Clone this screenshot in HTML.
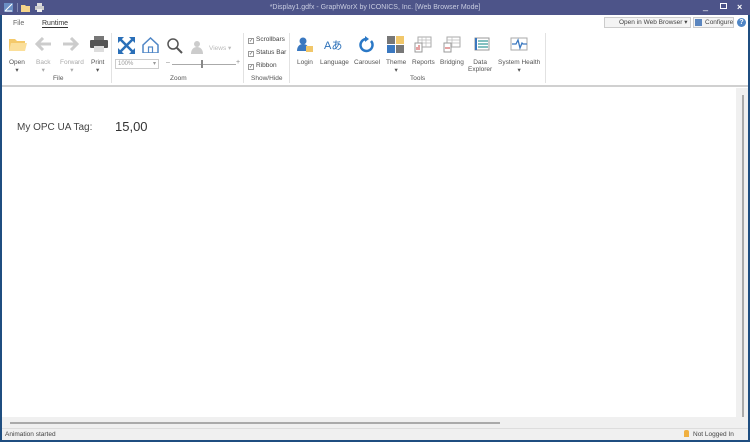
<!DOCTYPE html>
<html><head><meta charset="utf-8"><style>
*{box-sizing:border-box;margin:0;padding:0}
body{width:750px;height:442px;overflow:hidden;background:#1f4e80;font-family:"Liberation Sans",sans-serif;font-size:7px;color:#444;position:relative}
.abs{position:absolute}
.title{left:0;top:0;width:750px;height:15px;background:#4d5489;color:#c8cce0;font-size:7px;text-align:center;line-height:15px}
.win{left:2px;top:15px;width:746px;height:425px;background:#fff}
.lbl{position:absolute;font-size:6.5px;color:#555;text-align:center;white-space:nowrap}
.grp{position:absolute;font-size:6.5px;color:#555;top:60px}
.sep{position:absolute;top:18px;width:1px;height:50px;background:#e2e2e2}
.cb{position:absolute;font-size:6.5px;color:#444}
.cb i{display:inline-block;width:6px;height:6px;border:1px solid #999;margin-right:2px;vertical-align:-1px;font-style:normal;font-size:5px;line-height:5px;text-align:center}
</style></head><body>
<div class="abs title">*Display1.gdfx - GraphWorX by ICONICS, Inc. [Web Browser Mode]</div>
<svg class="abs" style="left:4px;top:3px" width="10" height="9"><rect width="9" height="9" fill="#6c8fc4"/><path d="M1 8 L8 1 M1 8 H8" stroke="#fff" stroke-width="1"/></svg>
<div class="abs" style="left:17px;top:3px;width:1px;height:9px;background:#8088b0"></div>
<svg class="abs" style="left:21px;top:4px" width="10" height="8"><path d="M0 1h4l1 1h4v6H0z" fill="#f5d48a"/></svg>
<svg class="abs" style="left:35px;top:3px" width="9" height="9"><rect x="2" y="0" width="5" height="3" fill="#ddd"/><rect x="0" y="3" width="9" height="4" fill="#ccc"/><rect x="2" y="6" width="5" height="3" fill="#eee"/></svg>
<div class="abs" style="left:703px;top:1px;color:#fff;font-size:9px">_</div>
<div class="abs" style="left:720px;top:3px;width:7px;height:6px;border:1px solid #fff"></div>
<div class="abs" style="left:737px;top:2px;color:#fff;font-size:9px;font-weight:bold">×</div>
<div class="abs win">
  <div class="abs" style="left:11px;top:5px;font-size:7px;color:#666">File</div>
  <div class="abs" style="left:40px;top:5px;font-size:7px;color:#333;border-bottom:1px solid #333">Runtime</div>
  <div class="abs" style="left:602px;top:2px;width:87px;height:11px;border:1px solid #ccc;background:#f4f4f4;font-size:6.5px;line-height:9px;padding-left:14px;color:#444">Open in Web Browser ▾</div>
  <div class="abs" style="left:691px;top:2px;width:41px;height:11px;border:1px solid #ccc;background:#f4f4f4;font-size:6.5px;line-height:9px;padding-left:11px;color:#444">Configure</div>
  <div class="abs" style="left:693px;top:4px;width:7px;height:7px;background:#5b86bf"></div>
  <div class="abs" style="left:735px;top:3px;width:9px;height:9px;border-radius:50%;background:#4f86c6;color:#fff;font-size:7px;text-align:center;line-height:9px;font-weight:bold">?</div>

  <svg class="abs" style="left:7px;top:22px" width="18" height="14"><path d="M0 2h6l2 2h8v10H0z" fill="#f4c96a"/><path d="M2 6h16l-2 8H0z" fill="#fbdf9a"/></svg>
  <div class="lbl" style="left:7px;top:44px">Open<br>▾</div>
  <svg class="abs" style="left:33px;top:22px" width="16" height="14"><path d="M8 1L2 7l6 6M2 7h14" stroke="#ccc" stroke-width="3" fill="none"/></svg>
  <div class="lbl" style="left:34px;top:44px;color:#aaa">Back<br>▾</div>
  <svg class="abs" style="left:61px;top:22px" width="16" height="14"><path d="M8 1l6 6-6 6M14 7H0" stroke="#ccc" stroke-width="3" fill="none"/></svg>
  <div class="lbl" style="left:58px;top:44px;color:#aaa">Forward<br>▾</div>
  <svg class="abs" style="left:88px;top:21px" width="18" height="16"><rect x="4" y="0" width="10" height="4" fill="#777"/><rect x="0" y="4" width="18" height="8" rx="1" fill="#555"/><rect x="4" y="10" width="10" height="6" fill="#ddd"/></svg>
  <div class="lbl" style="left:89px;top:44px">Print<br>▾</div>
  <div class="grp" style="left:51px">File</div>
  <div class="sep" style="left:109px"></div>

  <svg class="abs" style="left:116px;top:22px" width="17" height="17"><rect width="17" height="17" fill="#fff"/><path d="M2 2L15 15M15 2L2 15" stroke="#2a6fb8" stroke-width="2.5"/><path d="M0 0h6L0 6zM17 0v6l-6-6zM0 17v-6l6 6zM17 17h-6l6-6z" fill="#2a6fb8"/></svg>
  <svg class="abs" style="left:140px;top:22px" width="17" height="16"><path d="M1 8L8.5 1 16 8v8H1z" fill="none" stroke="#4f86c6" stroke-width="1.5"/><rect x="6.5" y="10" width="4" height="6" fill="none" stroke="#4f86c6" stroke-width="1.2"/></svg>
  <svg class="abs" style="left:164px;top:22px" width="17" height="17"><circle cx="7" cy="7" r="5" fill="none" stroke="#555" stroke-width="1.5"/><path d="M11 11l5 5" stroke="#555" stroke-width="2"/></svg>
  <svg class="abs" style="left:189px;top:25px" width="14" height="14"><circle cx="6" cy="4" r="3" fill="#ccc"/><path d="M0 14c0-5 3-7 6-7s6 2 6 7z" fill="#ccc"/></svg>
  <div class="lbl" style="left:207px;top:29px;color:#bbb">Views ▾</div>
  <div class="abs" style="left:113px;top:44px;width:44px;height:10px;border:1px solid #ccc;font-size:6px;color:#999;line-height:8px;padding-left:2px">100%<span style="float:right;padding-right:2px">▾</span></div>
  <div class="abs" style="left:164px;top:44px;font-size:7px;color:#888">–</div>
  <div class="abs" style="left:170px;top:49px;width:64px;height:1px;background:#aaa"></div>
  <div class="abs" style="left:199px;top:45px;width:2px;height:8px;background:#888"></div>
  <div class="abs" style="left:234px;top:44px;font-size:7px;color:#888">+</div>
  <div class="grp" style="left:168px">Zoom</div>
  <div class="sep" style="left:241px"></div>

  <div class="cb" style="left:246px;top:21px"><i>✓</i>Scrollbars</div>
  <div class="cb" style="left:246px;top:34px"><i>✓</i>Status Bar</div>
  <div class="cb" style="left:246px;top:47px"><i>✓</i>Ribbon</div>
  <div class="grp" style="left:249px">Show/Hide</div>
  <div class="sep" style="left:287px"></div>

  <svg class="abs" style="left:295px;top:22px" width="16" height="16"><circle cx="6" cy="4" r="3.5" fill="#3a78c0"/><path d="M0 14c0-5 3-7 6-7s6 2 6 7z" fill="#3a78c0"/><rect x="9" y="9" width="7" height="6" fill="#f1c76a"/></svg>
  <div class="lbl" style="left:295px;top:44px">Login</div>
  <div class="abs" style="left:322px;top:22px;font-size:11px;color:#2a6fb8;font-family:'Liberation Sans','Noto Sans CJK JP',sans-serif">Aあ</div>
  <div class="lbl" style="left:318px;top:44px">Language</div>
  <svg class="abs" style="left:357px;top:21px" width="16" height="17"><path d="M12 5a6 6 0 1 1-5-2" fill="none" stroke="#2a78c6" stroke-width="2.5"/><path d="M6 0l4 3-4 3z" fill="#2a78c6"/></svg>
  <div class="lbl" style="left:352px;top:44px">Carousel</div>
  <svg class="abs" style="left:385px;top:21px" width="17" height="17"><rect width="8" height="8" fill="#777"/><rect x="9" width="8" height="8" fill="#f1c76a"/><rect y="9" width="8" height="8" fill="#3a78c0"/><rect x="9" y="9" width="8" height="8" fill="#777"/></svg>
  <div class="lbl" style="left:384px;top:44px">Theme<br>▾</div>
  <svg class="abs" style="left:412px;top:21px" width="18" height="17"><rect x="4" y="1" width="13" height="10" fill="#fff" stroke="#aaa"/><path d="M4 4h13M4 7h13M8 1v10M12 1v10" stroke="#bbb" stroke-width=".7"/><rect x="1" y="7" width="7" height="9" fill="#fff" stroke="#999"/><path d="M3 14v-3M5 14v-5" stroke="#c44" stroke-width="1"/></svg>
  <div class="lbl" style="left:410px;top:44px">Reports</div>
  <svg class="abs" style="left:441px;top:21px" width="18" height="17"><rect x="4" y="1" width="13" height="10" fill="#fff" stroke="#aaa"/><path d="M4 4h13M4 7h13M9 1v10" stroke="#bbb" stroke-width=".7"/><rect x="1" y="7" width="7" height="9" fill="#fff" stroke="#999"/><path d="M2 12h5" stroke="#c44"/></svg>
  <div class="lbl" style="left:438px;top:44px">Bridging</div>
  <svg class="abs" style="left:472px;top:22px" width="16" height="15"><rect x="1" y="1" width="14" height="12" fill="#fff" stroke="#999"/><path d="M4 4h10M4 7h10M4 10h10" stroke="#3a9a9a" stroke-width="1.2"/><rect x="1" y="1" width="2" height="12" fill="#3a78c0"/></svg>
  <div class="lbl" style="left:466px;top:44px">Data<br>Explorer</div>
  <svg class="abs" style="left:508px;top:21px" width="18" height="17"><rect x="1" y="2" width="16" height="12" fill="#fff" stroke="#aaa"/><path d="M2 8h4l2-4 2 8 2-5 1 1h4" stroke="#3a78c0" stroke-width="1.3" fill="none"/></svg>
  <div class="lbl" style="left:496px;top:44px">System Health<br>▾</div>
  <div class="grp" style="left:408px">Tools</div>
  <div class="sep" style="left:543px"></div>

  <div class="abs" style="left:0;top:70px;width:746px;height:2px;background:#d0d0d0"></div>

  <div class="abs" style="left:15px;top:107px;font-size:10px;color:#444">My OPC UA Tag:</div>
  <div class="abs" style="left:113px;top:104px;font-size:13px;color:#333">15,00</div>

  <div class="abs" style="left:734px;top:73px;width:12px;height:338px;background:#f0f0f0"></div>
  <div class="abs" style="left:740px;top:80px;width:2px;height:325px;background:#aaa"></div>
  <div class="abs" style="left:0;top:402px;width:746px;height:11px;background:#f0f0f0"></div>
  <div class="abs" style="left:8px;top:407px;width:490px;height:2px;background:#aaa"></div>

  <div class="abs" style="left:0;top:413px;width:746px;height:12px;background:#f0f0f0;border-top:1px solid #ddd"></div>
  <div class="abs" style="left:3px;top:416px;font-size:6.5px;color:#444">Animation started</div>
  <div class="abs" style="left:682px;top:415px;width:5px;height:7px;background:#f0b040;border-radius:2px 2px 0 0"></div>
  <div class="abs" style="left:691px;top:416px;font-size:6.5px;color:#444">Not Logged In</div>
</div>
</body></html>
